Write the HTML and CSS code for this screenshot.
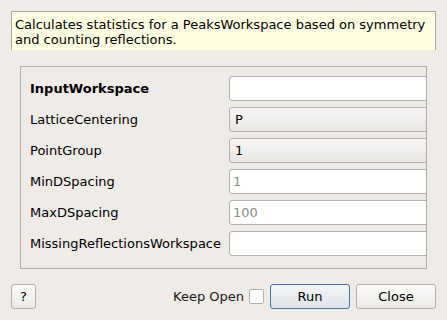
FILE: index.html
```html
<!DOCTYPE html>
<html lang="en">
<head>
    <meta charset="UTF-8">
    <meta name="viewport" content="width=device-width, initial-scale=1.0">
    <title>CountReflections</title>
    <link rel="stylesheet" href="styles.css">
</head>
<body>
    <div class="algo-dialog">
        <div class="algo-summary">
            Calculates statistics for a PeaksWorkspace based on symmetry and counting reflections.
        </div>

        <div class="algo-props">
            <div class="algo-row">
                <label class="algo-label bold">InputWorkspace</label>
                <input class="algo-input" type="text">
            </div>
            <div class="algo-row">
                <label class="algo-label">LatticeCentering</label>
                <div class="algo-combo">P</div>
            </div>
            <div class="algo-row">
                <label class="algo-label">PointGroup</label>
                <div class="algo-combo">1</div>
            </div>
            <div class="algo-row">
                <label class="algo-label">MinDSpacing</label>
                <input class="algo-input" type="text" placeholder="1">
            </div>
            <div class="algo-row">
                <label class="algo-label">MaxDSpacing</label>
                <input class="algo-input" type="text" placeholder="100">
            </div>
            <div class="algo-row">
                <label class="algo-label">MissingReflectionsWorkspace</label>
                <input class="algo-input" type="text">
            </div>
        </div>

        <div class="algo-buttons">
            <button class="algo-btn help">?</button>
            <span class="algo-spacer"></span>
            <label class="algo-keep">Keep Open <span class="algo-check"></span></label>
            <button class="algo-btn run">Run</button>
            <button class="algo-btn close">Close</button>
        </div>
    </div>
</body>
</html>
```

FILE: styles.css
```css
html, body {
    margin: 0;
    padding: 0;
    background-color: #efebe7;
}

.algo-dialog {
    width: 447px;
    height: 320px;
    font-family: "DejaVu Sans", sans-serif;
    font-size: 13px;
    color: #000;
}

.algo-summary {
    margin: 11px 11px 0 11px;
    height: 39px;
    box-sizing: border-box;
    padding: 5px 4px 0 3px;
    background-color: #ffffe1;
    border: 1px solid #a8a6a3;
    border-bottom: none;
    line-height: 15px;
}

.algo-props {
    margin: 16px 20px 0 20px;
    height: 203px;
    box-sizing: border-box;
    border: 1px solid #b1aeaa;
    padding: 9px 0 12px 9px;
    overflow: hidden;
    display: flex;
    flex-direction: column;
    gap: 6px;
}

.algo-row {
    display: flex;
    align-items: center;
    height: 25px;
}

.algo-label {
    width: 199px;
    flex: none;
}

.algo-label.bold {
    font-weight: bold;
}

.algo-input,
.algo-combo {
    flex: none;
    width: 230px;
    height: 25px;
    box-sizing: border-box;
    border: 1px solid #b3b0ac;
    border-radius: 3px;
    font-family: inherit;
    font-size: 13px;
    margin: 0;
}

.algo-input {
    background-color: #fff;
    padding: 0 3px;
    outline: none;
}

.algo-input::placeholder {
    color: #8e8c89;
}

.algo-combo {
    background: linear-gradient(#f7f6f5, #e9e7e4);
    padding: 0 5px;
    line-height: 23px;
}

.algo-buttons {
    display: flex;
    align-items: center;
    margin: 15px 11px 0 11px;
    height: 25px;
    gap: 6px;
}

.algo-spacer {
    flex: 1;
}

.algo-keep {
    display: flex;
    align-items: center;
    gap: 5px;
    color: #1a1a1a;
}

.algo-check {
    display: inline-block;
    width: 13px;
    height: 13px;
    background-color: #fff;
    border: 1px solid #b3b0ac;
    border-radius: 2px;
}

.algo-btn {
    height: 25px;
    box-sizing: border-box;
    border: 1px solid #b3b0ac;
    border-radius: 3px;
    background: linear-gradient(#fcfcfb, #ebe9e6);
    font-family: inherit;
    font-size: 13px;
    color: #000;
    padding: 0;
}

.algo-btn.help {
    width: 25px;
}

.algo-btn.run {
    width: 80px;
    border-color: #3a78aa;
    background: linear-gradient(#f4f6f8, #dde3e9);
}

.algo-btn.close {
    width: 80px;
}
```
